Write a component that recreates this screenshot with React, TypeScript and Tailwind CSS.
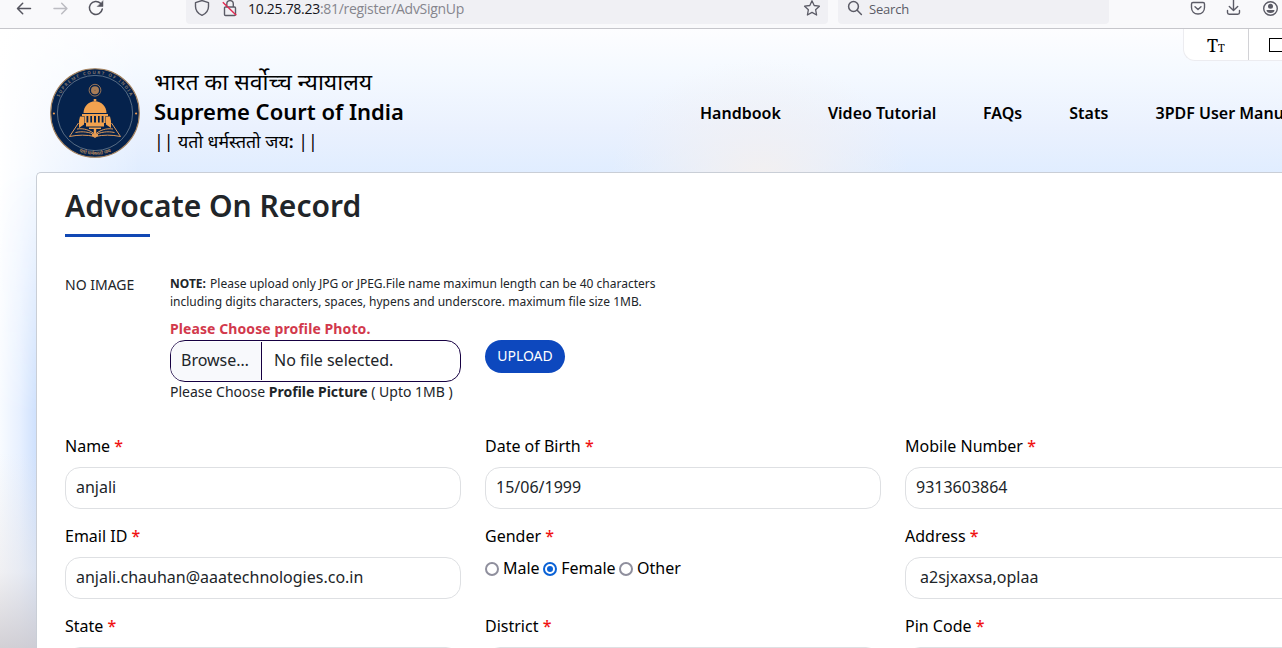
import type { ReactNode } from "react";

function Emblem() {
  return (
    <svg viewBox="0 0 90 90" className="h-[90px] w-[90px] shrink-0" aria-hidden="true">
      <defs>
        <path id="arcTop" d="M5.9 45 A39.1 39.1 0 0 1 84.1 45" />
        <path id="arcBottom" d="M3 45 A42 42 0 0 0 87 45" />
      </defs>
      <circle cx="45" cy="45" r="44.3" fill="#05224c" stroke="#a5835f" strokeWidth="1.1" />
      <circle cx="45" cy="45" r="37.6" fill="none" stroke="#7b8c9c" strokeWidth="0.7" />
      <text fontSize="4.4" fill="#8f8072" fontFamily="Noto Sans" letterSpacing="1.5" fontWeight="600">
        <textPath href="#arcTop" startOffset="50%" textAnchor="middle">SUPREME COURT OF INDIA</textPath>
      </text>
      <text fontSize="5" fill="#b88b60" fontWeight="600" fontFamily="Noto Sans Devanagari, Noto Sans, sans-serif">
        <textPath href="#arcBottom" startOffset="50%" textAnchor="middle">यतो धर्मस्ततो जय</textPath>
      </text>
      <circle cx="3.9" cy="45.5" r="1.1" fill="#ee9c50" />
      <circle cx="86.1" cy="45.5" r="1.1" fill="#ee9c50" />
      <g fill="none" stroke="#a87c56">
        <circle cx="45" cy="22.2" r="5.9" strokeWidth="0.9" />
        <circle cx="45" cy="22.2" r="2.2" strokeWidth="3.6" />
      </g>
      <g fill="#f2a24f">
        <path d="M43.7 31h2.6v2.4h-2.6z" />
        <path d="M33.5 45c0-6.5 5-11.8 11.5-11.8S56.5 38.500 56.500 45z" />
        <path d="M32 46h26v2H32zM34.500 48h2v7h-2zM38.300 48h2v7h-2zM42 48h2v7h-2zM46 48h2v7h-2zM49.700 48h2v7h-2zM53.500 48h2v7h-2z" />
        <path d="M30 48.500h4v8l-5 3.500v-7zM60 48.500h-4v8l5 3.500v-7z" />
        <path d="M36 54.500h18v4H36zM39 59.500h12v1.500H39zM43.800 61h2.400v6.500h-2.400zM42 66h6v2l-3 2-3-2z" />
      </g>
      <path d="M28.500 55l-9 13.500c9-1.800 17-1.800 25.500 0 8.500-1.800 16.500-1.800 25.500 0L61.500 55M25.500 64.500c7-1.500 14-.5 19.500 2.500 5.500-3 12.500-4 19.500-2.500M27 61c7-1 13 1 18 5.500 5-4.500 11-6.500 18-5.500" fill="none" stroke="#dc985a" strokeWidth="1" />
    </svg>
  );
}

function BrowserBar() {
  return (
    <div className="flex h-[29px] shrink-0 items-start border-b border-[#c6c6cb] bg-[#f9f9fb] text-[#5b5b66]">
      <svg width="186" height="24" viewBox="0 0 186 24" fill="none" stroke="#55555f" strokeWidth="1.5" strokeLinecap="round" strokeLinejoin="round">
        <path d="M30.5 8.5H17.7M22.7 3.2L17.5 8.5l5.2 5.3" />
        <path d="M54 8.5h12.8M61.7 3.2l5.2 5.3-5.2 5.3" stroke="#bcbcc2" />
        <path d="M100.500 3.300A6.500 6.500 0 1 0 102.300 9" />
        <path d="M103 1v5.500h-5.500z" fill="#55555f" strokeWidth="0.5" />
      </svg>
      <div className="flex h-6 w-[642px] items-start rounded-b-[4px] bg-[#f0f0f4]">
        <svg width="62" height="24" viewBox="186 0 62 24" fill="none" stroke="#5b5b66" strokeWidth="1.4" strokeLinejoin="round">
          <path d="M202 .5l6.500 2.200v3.800c0 4-2.300 7-6.500 8.900-4.200-1.900-6.500-4.900-6.500-8.900V2.700z" />
          <path d="M225.500 7h9c.7 0 1 .4 1 1v6.500c0 .6-.4 1-1 1h-9c-.6 0-1-.4-1-1V8c0-.6.4-1 1-1zM226.800 7V4c0-4.500 6.500-4.500 6.500 0v3" />
          <path d="M222.800 2.200l13.500 13" stroke="#e22850" />
        </svg>
        <span className="grow font-['Open_Sans','Noto_Sans',sans-serif] text-[14px] leading-[18px] tracking-[-0.29px] text-[#85858d]"><span className="text-[#15141a]">10.25.78.23</span>:81/register/AdvSignUp</span>
        <svg width="26" height="24" viewBox="802 0 26 24" fill="none" stroke="#5b5b66" strokeWidth="1.3" strokeLinejoin="round">
          <path d="M812 .8l2.200 4.700 5.200.7-3.800 3.500 1 5.300-4.600-2.600-4.600 2.600 1-5.300-3.800-3.500 5.200-.7z" />
        </svg>
      </div>
      <div className="ml-[10px] flex h-6 w-[271px] rounded-b-[4px] bg-[#f0f0f4]">
        <svg width="31" height="24" viewBox="838 0 31 24" fill="none" stroke="#5b5b66" strokeWidth="1.5" strokeLinecap="round">
          <circle cx="853.5" cy="6.5" r="4.9" />
          <path d="M857.200 10.200l4.200 4.300" />
        </svg>
        <span className="font-['Open_Sans','Noto_Sans',sans-serif] text-[13px] leading-[18px] tracking-[-0.2px]">Search</span>
      </div>
      <svg className="ml-auto" width="110" height="24" viewBox="1172 0 110 24" fill="none" stroke="#5b5b66" strokeWidth="1.4" strokeLinecap="round" strokeLinejoin="round">
        <path d="M1193 2.500h10c1 0 1.500.5 1.500 1.500v3.500c0 3.800-2.700 6.500-6.500 6.500s-6.500-2.700-6.500-6.500V4c0-1 .5-1.500 1.500-1.500zM1195 6.700l3 2.800 3-2.800" />
        <path d="M1233.500-1v11M1229.300 6.500l4.200 4 4.200-4M1227.500 10.500v2c0 1 .7 1.700 1.700 1.700h8.600c1 0 1.700-.7 1.700-1.700v-2" />
        <circle cx="1270.5" cy="8.5" r="6.8" />
        <circle cx="1270.5" cy="6.2" r="2.5" fill="#5b5b66" stroke="none" />
        <path d="M1266.500 10h8c0 1.700-1.500 3-4 3s-4-1.300-4-3z" fill="#5b5b66" stroke="none" />
      </svg>
    </div>
  );
}

function Header() {
  return (
    <header className="relative flex h-[143px] shrink-0 items-start pl-[50px]">
      <div className="mt-[39px]">
        <Emblem />
      </div>
      <div className="mt-[34px] w-[300px] shrink-0 pl-[14px] whitespace-nowrap text-black">
        <div className="h-[33px] text-[23px] leading-[37px]">भारत का सर्वोच्च न्यायालय</div>
        <div className="h-[30px] text-[22px] leading-[30px] font-semibold">Supreme Court of India</div>
        <div className="text-[17.7px] leading-[30px]">|| यतो धर्मस्ततो जय<b className="font-semibold">:</b> ||</div>
      </div>
      <nav className="mt-[72px] ml-[260px] flex gap-[47px] text-[16px] leading-6 font-semibold whitespace-nowrap text-black">
        <a className="w-[81px] shrink-0">Handbook</a>
        <a className="w-[108px] shrink-0">Video Tutorial</a>
        <a className="w-[39.3px] shrink-0">FAQs</a>
        <a className="w-[39.2px] shrink-0">Stats</a>
        <a className="shrink-0">3PDF User Manual</a>
      </nav>
      <div className="absolute top-0 right-0 flex h-8 w-[99px] rounded-bl-[12px] border-b border-l border-[#ececf0] bg-white">
        <div className="w-[65px] shrink-0 border-r border-[#d2d2d6] pl-[23px] font-['Noto_Serif','Liberation_Serif',serif] leading-8 text-black">
          <span className="text-[18px]">T</span><span className="text-[11px]">T</span>
        </div>
        <div className="mt-[9px] ml-[20px] h-[14px] w-[13px] shrink-0 border border-r-0 border-black" />
      </div>
    </header>
  );
}

function Field({ label, children }: { label: string; children?: ReactNode }) {
  return (
    <div className="h-[90px]">
      <div className="mb-[9px] text-[16px] leading-6 text-black">{label} <span className="font-medium text-[#f01414]">*</span></div>
      {children}
    </div>
  );
}

function Box({ value = "", wide = false }: { value?: string; wide?: boolean }) {
  return (
    <div className={"h-[42px] rounded-[15px] border border-[#dee0e3] bg-white text-[16px] leading-[39px] text-[#212529] " + (wide ? "pl-[14px]" : "pl-[10px]")}>
      {value}
    </div>
  );
}

function Radio({ label, checked = false }: { label: string; checked?: boolean }) {
  return (
    <span className="flex items-center gap-[4px]">
      <span className={"mt-[2px] flex h-[14px] w-[14px] shrink-0 items-center justify-center rounded-full border-2 bg-white " + (checked ? "border-[#0a62d6]" : "border-[#8f8f9d]")}>
        {checked && <span className="h-[6px] w-[6px] rounded-full bg-[#0a62d6]" />}
      </span>
      {label}
    </span>
  );
}

export default function App() {
  return (
    <div className="flex h-[648px] w-full flex-col overflow-hidden font-['Noto_Sans','Noto_Sans_Devanagari',sans-serif] text-[#212529]">
      <BrowserBar />
      <div className="flex min-h-0 grow flex-col bg-[radial-gradient(ellipse_150px_120px_at_760px_150px,#f3f0f0_0%,#f2f0f2b0_35%,#f2f0f240_75%,#f2f0f200_100%),linear-gradient(to_right,#fff_0px,#ffffffa0_45px,#ffffff00_140px),linear-gradient(to_bottom,#fdfdff_0px,#f4f9ff_45px,#eaf1fe_100px,#e0edff_145px)]">
        <Header />
        <div className="flex min-h-0 grow">
          <div className="w-9 shrink-0 bg-[linear-gradient(to_bottom,#ffffff00_280px,#e8e5e680_400px,#c9c6cc_500px),linear-gradient(to_right,#f8fbff_0px,#e7f0ff_20px,#cfe1fd_36px)] [mask-image:linear-gradient(to_bottom,transparent_0px,black_240px)]" />
          <main className="w-[1290px] shrink-0 rounded-tl-[5px] border-t border-l border-[#c9ced6] bg-white pl-7">
            <h1 className="mt-[12px] text-[30px] leading-[42px] font-semibold">Advocate On Record</h1>
            <div className="mt-[7px] h-[3px] w-[85px] bg-[#1148b4]" />
            <section className="mt-[38px] flex h-[159px]">
              <div className="w-[105px] pt-[1px] text-[14px] leading-[18px]">NO IMAGE</div>
              <div className="w-[315px]">
                <p className="w-[500px] text-[12px] leading-[18px] whitespace-nowrap"><b className="mr-[1px] font-bold">NOTE:</b> Please upload only JPG or JPEG.File name maximun length can be 40 characters<br />including digits characters, spaces, hypens and underscore. maximum file size 1MB.</p>
                <div className="mt-[7px] h-[22px] text-[14px] leading-[22px] font-bold tracking-[0.09px] text-[#d2394c]">Please Choose profile Photo.</div>
                <div className="flex h-[42px] w-[291px] overflow-hidden rounded-[15px] border border-[#160042] bg-white text-[16px] leading-[36px]">
                  <div className="my-[1px] w-[91px] border-r border-[#160042] bg-[#f8f9fc] pl-[10px]">Browse…</div>
                  <div className="pt-px pl-3">No file selected.</div>
                </div>
                <div className="text-[14px] leading-[19px] whitespace-nowrap">Please Choose <b className="font-bold">Profile Picture</b> ( Upto 1MB )</div>
              </div>
              <button className="mt-[65px] h-[33px] w-20 rounded-full bg-[#0d48be] pb-[2px] text-[14px] leading-[31px] text-white">UPLOAD</button>
            </section>
            <section className="grid grid-cols-[396px_396px_396px] gap-x-6">
              <Field label="Name"><Box value="anjali" /></Field>
              <Field label="Date of Birth"><Box value="15/06/1999" /></Field>
              <Field label="Mobile Number"><Box value="9313603864" /></Field>
              <Field label="Email ID"><Box value="anjali.chauhan@aaatechnologies.co.in" /></Field>
              <Field label="Gender">
                <div className="-mt-[1px] flex gap-[3.5px] text-[16px] leading-6 text-black">
                  <Radio label="Male" />
                  <Radio label="Female" checked />
                  <Radio label="Other" />
                </div>
              </Field>
              <Field label="Address"><Box value="a2sjxaxsa,oplaa" wide /></Field>
              <Field label="State"><Box /></Field>
              <Field label="District"><Box /></Field>
              <Field label="Pin Code"><Box /></Field>
            </section>
          </main>
        </div>
      </div>
    </div>
  );
}
